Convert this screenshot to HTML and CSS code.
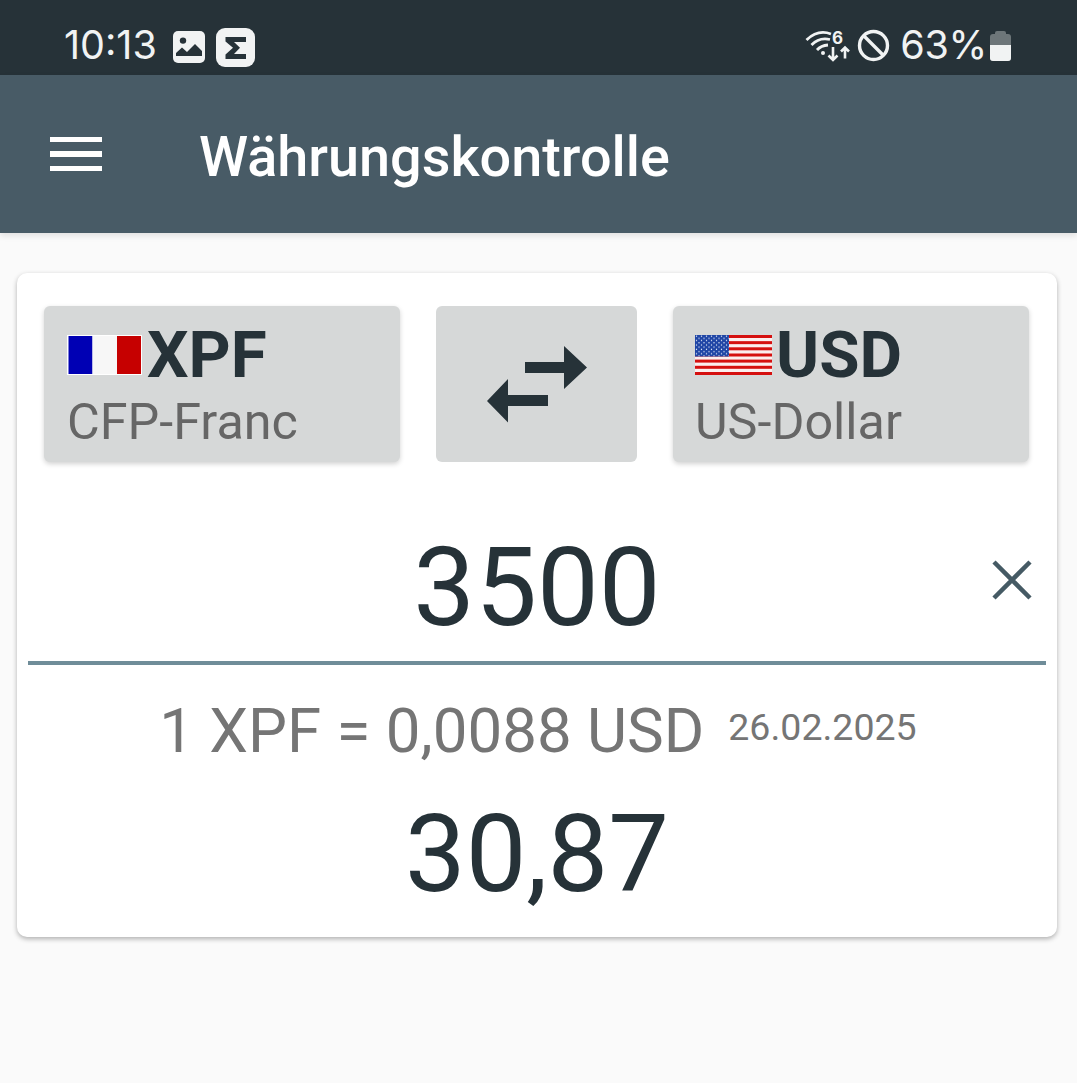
FILE: index.html
```html
<!DOCTYPE html>
<html lang="de">
<head>
    <meta charset="UTF-8">
    <meta name="viewport" content="width=device-width, initial-scale=1.0">
    <title>Währungskontrolle</title>
    <link rel="stylesheet" href="styles.css">
</head>
<body>
    <div class="status-bar">
        <div class="status-left">
            <span class="clock">10:13</span>
            <svg class="icon-picture" width="32" height="32" viewBox="0 0 32 32">
                <rect width="32" height="32" rx="5" fill="#f1f3f3"/>
                <circle cx="10" cy="9.600" r="3.200" fill="#263238"/>
                <path d="M3 25 V22 L9 16.500 L14 21 L22 13 L29 20 V25 Z" fill="#263238"/>
            </svg>
            <svg class="icon-sigma" width="39" height="39" viewBox="0 0 39 39">
                <rect width="39" height="39" rx="9" fill="#f1f3f3"/>
                <path d="M9.500 9 H30 V14 H18 L24 19.800 L18 26 H30 V31 H9.500 V26.500 L17 19.800 L9.500 13.500 Z" fill="#263238"/>
            </svg>
        </div>
        <div class="status-right">
            <svg class="icon-wifi" width="46" height="36" viewBox="0 0 46 36" fill="none" stroke="#f1f3f3">
                <path d="M1.500 11 Q13 0 26 5" stroke-width="2.800"/>
                <path d="M6.500 16 Q14 8 25 10.500" stroke-width="2.800"/>
                <path d="M12 21 Q16 16.500 23 16" stroke-width="2.800"/>
                <circle cx="18" cy="24" r="2" fill="#f1f3f3" stroke="none"/>
                <text x="27" y="15" class="wifi-six">6</text>
                <path d="M28 18 V31 M23.500 26.500 L28 31 L32.500 26.500" stroke-width="2.600"/>
                <path d="M40 29.500 V18.500 M36 22.500 L40 18.500 L44 22.500" stroke-width="2.600"/>
            </svg>
            <svg class="icon-block" width="33" height="33" viewBox="0 0 33 33" fill="none" stroke="#f1f3f3" stroke-width="3.400">
                <circle cx="16.500" cy="16.500" r="14"/>
                <path d="M6.500 6.500 L26.500 26.500"/>
            </svg>
            <span class="battery-text">63%</span>
            <div class="battery">
                <div class="battery-cap"></div>
                <div class="battery-body"><div class="battery-level"></div></div>
            </div>
        </div>
    </div>

    <header class="toolbar">
        <div class="menu-icon"><span></span><span></span><span></span></div>
        <h1>Währungskontrolle</h1>
    </header>

    <main class="card">
        <div class="currency-row">
            <button class="currency-btn">
                <div class="code-line">
                    <svg class="flag" width="75" height="40" viewBox="0 0 75 40">
                        <rect width="75" height="40" fill="#fff"/>
                        <rect x="1.500" y="1" width="24" height="38" fill="#0000b4"/>
                        <rect x="25.500" y="1" width="24.500" height="38" fill="#f7f7f7"/>
                        <rect x="50" y="1" width="24" height="38" fill="#c60000"/>
                    </svg>
                    <span class="code">XPF</span>
                </div>
                <div class="name">CFP-Franc</div>
            </button>
            <button class="swap-btn">
                <svg width="100" height="77" viewBox="0 0 100 77" fill="#263238">
                    <path d="M38 16 H77 V0 L100 21.500 L77 43 V27 H38 Z"/>
                    <path d="M61 49 H21 V33 L0 55 L21 76.500 V60 H61 Z"/>
                </svg>
            </button>
            <button class="currency-btn currency-usd">
                <div class="code-line">
                    <svg class="flag" width="77" height="40" viewBox="0 0 77 40">
                        <defs>
                            <pattern id="stars" width="5" height="4.400" patternUnits="userSpaceOnUse">
                                <circle cx="1.500" cy="1.200" r="0.700" fill="#e6ecf8"/>
                                <circle cx="4" cy="3.400" r="0.700" fill="#e6ecf8"/>
                            </pattern>
                        </defs>
                        <rect width="77" height="40" fill="#fbeeee"/>
                        <g fill="#d5100f">
                            <rect y="0" width="77" height="3"/>
                            <rect y="6.150" width="77" height="3"/>
                            <rect y="12.300" width="77" height="3"/>
                            <rect y="18.500" width="77" height="3"/>
                            <rect y="24.600" width="77" height="3"/>
                            <rect y="30.800" width="77" height="3"/>
                            <rect y="37" width="77" height="3"/>
                        </g>
                        <rect width="34" height="21.500" fill="#1f45a5"/>
                        <rect width="34" height="21.500" fill="url(#stars)"/>
                    </svg>
                    <span class="code">USD</span>
                </div>
                <div class="name">US-Dollar</div>
            </button>
        </div>

        <div class="amount-row">
            <span class="amount">3500</span>
            <svg class="clear-icon" width="40" height="40" viewBox="0 0 40 40" fill="none" stroke="#455a64" stroke-width="4.500">
                <path d="M2 2 L38 38 M38 2 L2 38"/>
            </svg>
        </div>

        <div class="rate-row">
            <span class="rate">1 XPF = 0,0088 USD</span>
            <span class="rate-date">26.02.2025</span>
        </div>
        <div class="result">30,87</div>
    </main>
</body>
</html>
```

FILE: styles.css
```css
* {
    box-sizing: border-box;
}
body {
    margin: 0;
    min-height: 100vh;
    font-family: 'Roboto', sans-serif;
    background-color: #fafafa;
    color: #263238;
}
.status-bar {
    height: 75px;
    background-color: #263238;
    color: #f1f3f3;
    display: flex;
    justify-content: space-between;
    align-items: center;
    padding: 18px 66px 0 64px;
    font-size: 39.500px;
    font-family: 'Inter', 'Roboto', sans-serif;
}
.status-left,
.status-right {
    display: flex;
    align-items: center;
}
.status-bar svg {
    display: block;
}
.clock {
    width: 92px;
    margin-top: -4px;
}
.icon-picture {
    margin-left: 17px;
    margin-top: 1px;
}
.icon-sigma {
    margin-left: 11px;
    margin-top: 1px;
}
.wifi-six {
    font-size: 17px;
    font-weight: 700;
    fill: #f1f3f3;
    stroke: none;
}
.icon-block {
    margin-left: 6px;
    margin-top: -2px;
}
.battery-text {
    margin-left: 10px;
    margin-top: -4px;
    letter-spacing: -0.300px;
}
.battery {
    margin-left: 3px;
    width: 21px;
    margin-top: -1px;
}
.battery-cap {
    width: 11px;
    height: 3px;
    margin: 0 auto;
    background-color: #6d7679;
    border-radius: 2px 2px 0 0;
}
.battery-body {
    height: 27px;
    background-color: #6d7679;
    border-radius: 3px;
    overflow: hidden;
    display: flex;
    align-items: flex-end;
}
.battery-level {
    width: 100%;
    height: 16px;
    background-color: #f1f3f3;
}
.toolbar {
    height: 158px;
    background-color: #485b66;
    color: #fff;
    display: flex;
    align-items: center;
    padding-left: 50px;
    box-shadow: 0 3px 6px rgba(0, 0, 0, 0.1);
}
.menu-icon {
    width: 52px;
    display: flex;
    flex-direction: column;
    gap: 9px;
    margin-right: 97px;
}
.menu-icon span {
    display: block;
    height: 5.500px;
    background-color: #fff;
}
.toolbar h1 {
    margin: 6px 0 0;
    font-size: 55.800px;
    font-weight: 500;
}
.card {
    margin: 40px 20px 0 17px;
    height: 664px;
    background-color: #fff;
    border-radius: 10px;
    box-shadow: 0 2px 5px rgba(0, 0, 0, 0.3);
    padding: 33px 11px 0;
}
.currency-row {
    display: flex;
    justify-content: space-between;
    padding: 0 17px 0 16px;
    height: 156px;
}
.currency-btn,
.swap-btn {
    border: none;
    background-color: #d6d8d8;
    border-radius: 6px;
    font-family: inherit;
    color: inherit;
    padding: 0;
}
.currency-btn {
    width: 356px;
    padding: 16px 0 0 23px;
    display: flex;
    flex-direction: column;
    text-align: left;
    box-shadow: 0 2px 5px rgba(0, 0, 0, 0.18);
}
.currency-usd {
    padding-left: 22px;
}
.currency-usd .flag {
    margin-right: 4px;
}
.swap-btn {
    width: 201px;
    display: flex;
    align-items: center;
    justify-content: center;
}
.code-line {
    display: flex;
    align-items: center;
    height: 66px;
}
.flag {
    display: block;
    margin-right: 5px;
}
.code {
    font-size: 65.500px;
    font-weight: 700;
    line-height: 66px;
}
.name {
    font-size: 50.300px;
    line-height: 54px;
    color: #666;
    margin-top: 7px;
    white-space: nowrap;
}
.amount-row {
    position: relative;
    height: 203px;
    border-bottom: 4px solid #6f8d99;
    padding-top: 52px;
    display: flex;
    justify-content: center;
    align-items: center;
}
.amount {
    font-size: 110px;
}
.clear-icon {
    position: absolute;
    right: 14px;
    top: 98px;
}
.rate-row {
    display: flex;
    justify-content: center;
    align-items: baseline;
    margin-top: 28px;
    padding-left: 2px;
    color: #757575;
    line-height: 76px;
}
.rate {
    font-size: 61.800px;
}
.rate-date {
    font-size: 37.500px;
    margin-left: 24px;
    position: relative;
    top: -12px;
}
.result {
    text-align: center;
    font-size: 108px;
    line-height: 122px;
    margin-top: 16px;
}
```
